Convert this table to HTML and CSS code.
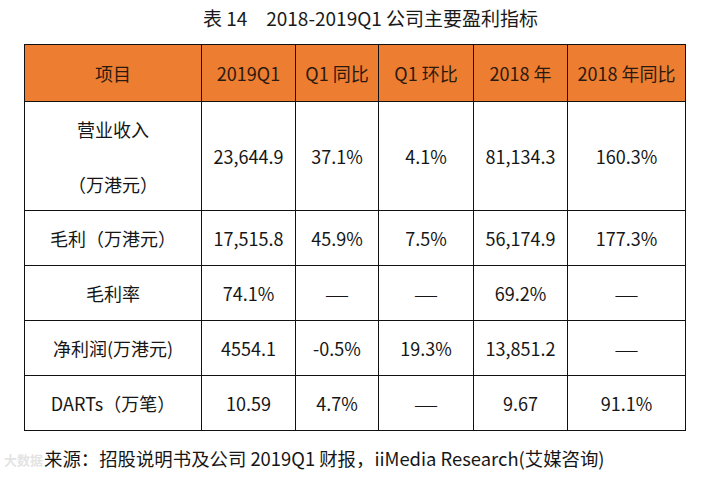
FILE: index.html
```html
<!DOCTYPE html>
<html lang="zh-CN">
<head>
<meta charset="utf-8">
<title>表 14 2018-2019Q1 公司主要盈利指标</title>
<link rel="stylesheet" href="styles.css">
</head>
<body>
<div class="page">
  <h1 class="title">表 14　2018-2019Q1 公司主要盈利指标</h1>
  <table class="data">
    <colgroup>
      <col class="c1"><col class="c2"><col class="c3"><col class="c4"><col class="c5"><col class="c6">
    </colgroup>
    <thead>
      <tr class="head">
        <th>项目</th><th>2019Q1</th><th>Q1 同比</th><th>Q1 环比</th><th>2018 年</th><th>2018 年同比</th>
      </tr>
    </thead>
    <tbody>
      <tr class="tall">
        <td><div class="stack"><span>营业收入</span><span>（万港元）</span></div></td>
        <td>23,644.9</td><td>37.1%</td><td>4.1%</td><td>81,134.3</td><td>160.3%</td>
      </tr>
      <tr class="row">
        <td>毛利（万港元）</td><td>17,515.8</td><td>45.9%</td><td>7.5%</td><td>56,174.9</td><td>177.3%</td>
      </tr>
      <tr class="row">
        <td>毛利率</td><td>74.1%</td><td><span class="dash">——</span></td><td><span class="dash">——</span></td><td>69.2%</td><td><span class="dash">——</span></td>
      </tr>
      <tr class="row">
        <td>净利润(万港元)</td><td>4554.1</td><td>-0.5%</td><td>19.3%</td><td>13,851.2</td><td><span class="dash">——</span></td>
      </tr>
      <tr class="row">
        <td>DARTs（万笔）</td><td>10.59</td><td>4.7%</td><td><span class="dash">——</span></td><td>9.67</td><td>91.1%</td>
      </tr>
    </tbody>
  </table>
  <p class="source">来源：招股说明书及公司 2019Q1 财报，iiMedia Research(艾媒咨询)</p>
  <div class="mark">大数据</div>
</div>
</body>
</html>
```

FILE: styles.css
```css
html, body {
  margin: 0;
  padding: 0;
  background: #ffffff;
}
.page {
  position: relative;
  width: 726px;
  height: 480px;
  box-sizing: border-box;
  padding: 5px 0 0 24px;
  font-family: "Noto Sans CJK SC", "Noto Sans", sans-serif;
  color: #161616;
}
.title {
  margin: 0;
  width: 661px;
  box-sizing: border-box;
  padding-left: 32px;
  text-align: center;
  font-size: 19px;
  font-weight: 400;
  line-height: 26px;
  height: 39px;
  color: #1a1a1a;
}
.data {
  border-collapse: collapse;
  table-layout: fixed;
  width: 662px;
  font-size: 18px;
}
.c1 { width: 177px; }
.c2 { width: 94px; }
.c3 { width: 83px; }
.c4 { width: 95px; }
.c5 { width: 94px; }
.c6 { width: 118px; }
.data th, .data td {
  border: 1px solid #111;
  text-align: center;
  vertical-align: middle;
  padding: 0;
  font-weight: 400;
  line-height: 24px;
}
.head th {
  background: #ed7d31;
  color: #2a1a10;
  height: 56px;
}
.tall td { height: 108px; }
.row td { height: 54px; }
.stack {
  display: flex;
  flex-direction: column;
  align-items: center;
  gap: 31px;
}
.dash {
  font-size: 14px;
  letter-spacing: 3px;
  margin-right: -3px;
}
.source {
  margin: 15px 0 0 0;
  font-size: 18.4px;
  line-height: 24px;
  padding-left: 20px;
  color: #161616;
}
.mark {
  position: absolute;
  left: 4px;
  top: 450px;
  font-size: 13px;
  font-weight: 700;
  color: rgba(200, 200, 200, 0.5);
}
```
